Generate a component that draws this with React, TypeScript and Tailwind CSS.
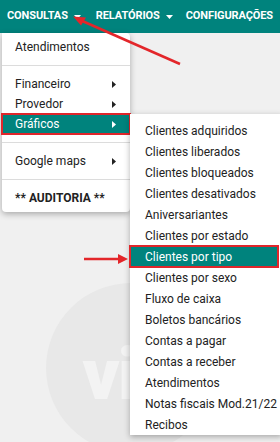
import React from "react";

const graficos = [
  "Clientes adquiridos",
  "Clientes liberados",
  "Clientes bloqueados",
  "Clientes desativados",
  "Aniversariantes",
  "Clientes por estado",
  "Clientes por tipo",
  "Clientes por sexo",
  "Fluxo de caixa",
  "Boletos bancários",
  "Contas a pagar",
  "Contas a receber",
  "Atendimentos",
  "Notas fiscais Mod.21/22",
  "Recibos",
];

const Caret = () => (
  <svg width="7" height="4" viewBox="0 0 7 4" className="ml-[6px] mt-[1px]">
    <path d="M0 0h7L3.5 4z" fill="currentColor" />
  </svg>
);

const Sub = ({ white }: { white?: boolean }) => (
  <svg width="4" height="7" viewBox="0 0 4 7" className={white ? "text-white" : "text-[#222]"}>
    <path d="M0 0v7l4-3.5z" fill="currentColor" />
  </svg>
);

const Divider = () => <div className="my-[8px] h-px bg-[#dcdcdc]" />;

const Item = ({ label, sub, active, bold }: { label: string; sub?: boolean; active?: boolean; bold?: boolean }) => (
  <div
    className={
      "flex h-[20px] items-center justify-between pl-[13px] pr-[14px] " +
      (active ? "bg-[#00837d] text-white outline-2 outline-[#e0262b] -outline-offset-1" : "text-[#222]") +
      (bold ? " font-bold" : "")
    }
  >
    <span>{label}</span>
    {sub && <Sub white={active} />}
  </div>
);

export default function App() {
  return (
    <div className="h-[442px] w-[280px] overflow-hidden bg-[#f0f0f0] font-['Roboto',sans-serif]">
      <div className="flex h-[33px] items-center whitespace-nowrap bg-[#00837d] pl-[7px] text-[11px] font-bold tracking-[-0.1px] text-white">
        <span className="flex items-center">CONSULTAS<Caret /></span>
        <span className="ml-[15px] flex items-center">RELATÓRIOS<Caret /></span>
        <span className="ml-[13px]">CONFIGURAÇÕES</span>
      </div>

      <div className="relative h-[409px]">
        {/* logo watermark */}
        <div className="absolute left-[46px] top-[250px] flex h-[170px] w-[170px] items-center justify-center overflow-hidden rounded-full bg-[#e8e8e8]">
          <span className="-ml-[44px] mt-[14px] text-[72px] font-black leading-none tracking-[-2px] text-[#f3f3f3]">vi</span>
        </div>

        {/* Consultas menu */}
        <div className="absolute left-[2px] top-0 w-[128px] rounded-b-[4px] rounded-tr-[4px] bg-white py-[4px] text-[12px] shadow-[0_2px_6px_rgba(0,0,0,0.3)]">
          <Item label="Atendimentos" />
          <Divider />
          <Item label="Financeiro" sub />
          <Item label="Provedor" sub />
          <Item label="Gráficos" sub active />
          <Divider />
          <Item label="Google maps" sub />
          <Divider />
          <Item label="** AUDITORIA **" bold />
        </div>

        {/* Gráficos submenu */}
        <div className="absolute left-[130px] top-[81px] w-[152px] bg-white pt-[6px] text-[12px] text-[#222] shadow-[0_2px_6px_rgba(0,0,0,0.3)]">
          {graficos.map((g) => (
            <div
              key={g}
              className={
                "flex h-[21px] items-center whitespace-nowrap pl-[15px] " +
                (g === "Clientes por tipo"
                  ? "mr-[4px] bg-[#00837d] text-white outline-2 outline-[#e0262b] -outline-offset-1"
                  : "")
              }
            >
              {g}
            </div>
          ))}
        </div>

        {/* annotation arrows */}
        <svg className="pointer-events-none absolute left-0 top-[-33px]" width="280" height="442">
          <line x1="180" y1="64" x2="80" y2="20" stroke="#e3262a" strokeWidth="2.5" />
          <path d="M73 16.5 L86 17.5 L81 25.5 Z" fill="#e3262a" />
          <line x1="84" y1="259" x2="120" y2="259" stroke="#e3262a" strokeWidth="2.5" />
          <path d="M128 259 L118 254 L118 264 Z" fill="#e3262a" />
        </svg>
      </div>
    </div>
  );
}
